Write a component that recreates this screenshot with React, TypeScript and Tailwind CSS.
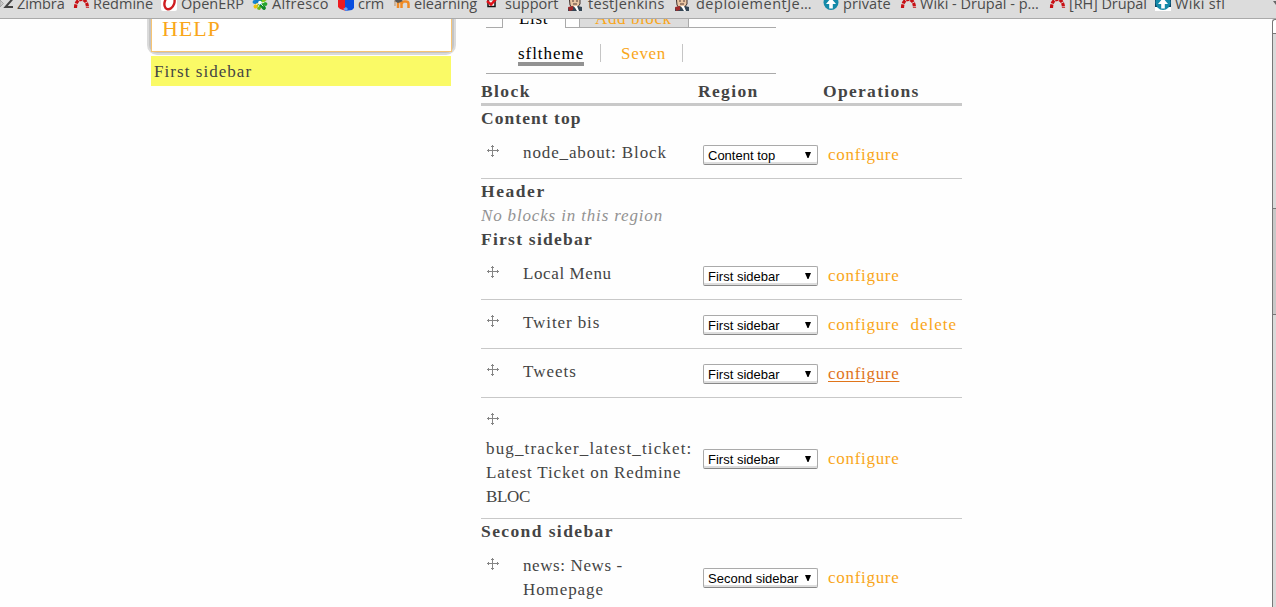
import React from "react";

const serif = "font-['Liberation_Serif',serif] text-[17px] leading-[24px] whitespace-nowrap";

function Redmine() {
  return (
    <svg width="17" height="16" viewBox="0 0 17 16" fill="none">
      <path d="M2.500 13C2.500 7.500 5 4.500 8.500 4.500s6 3 6 8.500" stroke="#c80f14" strokeWidth="3.200" strokeDasharray="3.700 .8" />
    </svg>
  );
}
function Zimbra() {
  return (
    <svg width="16" height="16" viewBox="0 0 16 16">
      <path d="M0 5l3.500 3.500L0 12z" fill="#c8c8c8" stroke="#999" strokeWidth=".8" />
      <path d="M5 4h7.500L5.500 12H13" stroke="#444" strokeWidth="2" fill="none" />
    </svg>
  );
}
function Opera() {
  return (
    <svg width="16" height="16" viewBox="0 0 16 16">
      <rect width="16" height="16" rx="2" fill="#fff" />
      <ellipse cx="8.500" cy="7.500" rx="4.800" ry="7" transform="rotate(20 8.500 7.500)" fill="none" stroke="#cf1c20" strokeWidth="2.400" />
    </svg>
  );
}
function Alfresco() {
  return (
    <svg width="16" height="16" viewBox="0 0 16 16" fill="none" strokeWidth="3.800" strokeLinecap="round">
      <path d="M8 8L2.500 7" stroke="#1684d0" /><path d="M8 8L3.500 11.500" stroke="#f0c30a" />
      <path d="M8 8L7 13" stroke="#71b816" /><path d="M8 8l4 5" stroke="#108a28" />
      <path d="M8 8l5.500 1" stroke="#25a52e" /><path d="M8 8l5-4" stroke="#86c81c" />
      <path d="M8 8V2" stroke="#18a648" /><path d="M8 8L3 3" stroke="#147bc6" />
      <path d="M8 8l-4 1.500M8 8l-2 4M8 8l3 3M8 8l4-.5" stroke="#fff" strokeWidth=".8" />
      <circle cx="8" cy="7.500" r="1.800" fill="#fff" />
    </svg>
  );
}
function Crm() {
  return (
    <svg width="16" height="16" viewBox="0 0 16 16">
      <path d="M0 3l8-3v16l-6-2-2-2z" fill="#ee1a20" /><path d="M7 0l9 1v12l-2 2-7 1z" fill="#0a4fe0" />
      <path d="M5 14l3-2 2 2-2 2z" fill="#6ba2ee" />
    </svg>
  );
}
function Moodle() {
  return (
    <svg width="16" height="16" viewBox="0 0 16 16" fill="none">
      <path d="M4 13V8q2-2.500 3.500 0v5M8 9q0-3 3-2.500 3.500-.5 3.500 2.500v4" stroke="#f08a24" strokeWidth="2.500" />
      <path d="M0 6l5-3 4 3-5 2z" fill="#555" /><path d="M1 6v5" stroke="#b98d62" />
    </svg>
  );
}
function Support() {
  return (
    <svg width="16" height="16" viewBox="0 0 16 16">
      <rect x="4" y="4.500" width="7" height="7" fill="#fff" stroke="#111" strokeWidth="1.500" />
      <path d="M3 6l4 3.500L13 3" fill="none" stroke="#e0121a" strokeWidth="2.500" />
    </svg>
  );
}
function Jenkins() {
  return (
    <svg width="16" height="16" viewBox="0 0 16 16">
      <path d="M2 0h11v9l-3 4H5L3 10z" fill="#e8c4a2" stroke="#40302c" />
      <path d="M1 16v-3l5-2 2 2 3-2 4 1v4z" fill="#334554" />
      <path d="M1 12l5-1v4l-4 1z" fill="#a22a2a" /><path d="M7 11l3 5h2l-2-5z" fill="#fff" />
      <path d="M5 6h2M9 6h2M6 9h4" stroke="#503a36" />
    </svg>
  );
}
function Arrow({ boxed = false }: { boxed?: boolean }) {
  return (
    <svg width="16" height="16" viewBox="0 0 16 16">
      {boxed && <><rect width="16" height="12" fill="#0b4264" /><rect y="12" width="16" height="4" fill="#fff" /></>}
      <circle cx="8" cy="7.500" r="7.500" fill="#148aa9" />
      <path d="M8 3l5 6h-3.200v4.500H6.200V9H3z" fill="#fff" />
    </svg>
  );
}

const bookmarks = [
  { w: "w-[73px]", icon: <Zimbra />, label: "Zimbra", t: "tracking-[-0.1px]" },
  { w: "w-[88px]", icon: <Redmine />, label: "Redmine", t: "ml-[3px]" },
  { w: "w-[91px]", icon: <Opera />, label: "OpenERP", t: "ml-[3px]" },
  { w: "w-[86px]", icon: <Alfresco />, label: "Alfresco", t: "ml-[3px] tracking-[0.3px]" },
  { w: "w-[56px]", icon: <Crm />, label: "crm", t: "ml-[3px]" },
  { w: "w-[90px]", icon: <Moodle />, label: "elearning", t: "ml-[3px]" },
  { w: "w-[83px]", icon: <Support />, label: "support", t: "ml-[4px]" },
  { w: "w-[107px]", icon: <Jenkins />, label: "testJenkins", t: "ml-[4px] tracking-[0.3px]" },
  { w: "w-[149px]", icon: <Jenkins />, label: "deploiementJe…", t: "ml-[5px] tracking-[0.5px]" },
  { w: "w-[77px]", icon: <Arrow />, label: "private", t: "ml-[3px] tracking-[0.1px]" },
  { w: "w-[149px]", icon: <Redmine />, label: "Wiki - Drupal - p…", t: "ml-[3px]" },
  { w: "w-[106px]", icon: <Redmine />, label: "[RH] Drupal", t: "ml-[3px] tracking-[-0.1px]" },
  { w: "w-[100px]", icon: <Arrow boxed />, label: "Wiki sfl", t: "ml-[3px] tracking-[0.35px]" },
];

function Move() {
  return (
    <svg className="ml-[5px] mt-px shrink-0" width="13" height="12" viewBox="0 0 13 12" fill="none" stroke="#858585" shapeRendering="crispEdges">
      <path d="M6.500 0v12M1 5.500h12M5 1.500h3M5 10.500h3M2.500 4v3M11.500 4v3" />
    </svg>
  );
}

function Select({ value }: { value: string }) {
  return (
    <div className="flex h-5 w-[115px] items-center justify-between rounded-[2px] border border-[#aaa] border-b-[#888] bg-white pl-1 pr-[6px] font-['Liberation_Sans',sans-serif] text-[13px] leading-[18px] text-black shadow-[inset_0_-2px_0_#ddd]">
      <span className="whitespace-nowrap pt-px">{value}</span>
      <svg className="-mt-px" width="6" height="6" viewBox="0 0 6 6"><path d="M0 0h6L3.500 6h-1z" /></svg>
    </div>
  );
}

type RowProps = { h: string; selTop: string; value: string; children: React.ReactNode; wrap?: boolean; hover?: boolean; del?: boolean };
function Row({ h, selTop, value, children, wrap, hover, del }: RowProps) {
  return (
    <div className={`mb-px flex w-[481px] shrink-0 border-b border-[#c8c8c8] ${h}`}>
      <div className={`flex w-[222px] pt-[13px] ${wrap ? "flex-col" : ""}`}>
        <Move />
        <div className={wrap ? "ml-[5px] mt-[12px]" : "-mt-[3px] ml-[24px]"}>{children}</div>
      </div>
      <div className={`flex items-start ${selTop}`}>
        <Select value={value} />
        <span className={`-mt-[2px] ml-[10px] tracking-[0.7px] ${hover ? "text-[#e0741a] underline underline-offset-2" : "text-[#f9a61a]"}`}>configure</span>
        {del && <span className="-mt-[2px] ml-[11px] tracking-[1px] text-[#f9a61a]">delete</span>}
      </div>
    </div>
  );
}

function Title({ children, className }: { children: React.ReactNode; className: string }) {
  return <div className={`h-6 shrink-0 text-[17.5px] font-bold leading-[22px] ${className}`}>{children}</div>;
}

export default function App() {
  return (
    <div className="flex h-[607px] w-[1276px] flex-col overflow-hidden bg-[#fefefe]">
      <div className="flex h-[19px] shrink-0 overflow-hidden border-b border-[#aaa] bg-[#dcdcdc]">
        {bookmarks.map((b) => (
          <div key={b.label} className={`flex h-5 shrink-0 ${b.w}`}>
            <span className="-mt-[5px] w-[17px] shrink-0">{b.icon}</span>
            <span className={`-mt-[6px] whitespace-nowrap font-['Open_Sans',sans-serif] text-[14.5px] leading-[20px] text-[#4b4b4b] ${b.t}`}>{b.label}</span>
          </div>
        ))}
        <svg className="mt-px ml-auto shrink-0" width="3" height="5"><path d="M0 0h3v4z" fill="#666" /></svg>
      </div>
      <div className={`flex min-h-0 flex-1 text-[#444] ${serif}`}>
        <aside className="w-[481px] shrink-0 pl-[147px]">
          <div className="h-[36px] w-[309px] rounded-b-[10px] bg-[#dadada] px-[2px] pb-[2px]">
            <div className="h-[34px] rounded-b-[8px] bg-[#c4c4c4] px-[2px]">
              <div className="h-[33px] w-[301px] border border-t-0 border-[#f7c473] bg-white pl-[10px] text-[22px] leading-[20px] tracking-[0.9px] text-[#f9a61a]">HELP</div>
            </div>
          </div>
          <div className="ml-[4px] mt-px h-[30px] w-[300px] bg-[#fafa66] pl-[3px] pt-[4px] tracking-[1.05px]">First sidebar</div>
        </aside>
        <main className="flex w-[481px] shrink-0 flex-col overflow-hidden">
          <div className="ml-[5px] flex h-[9px] w-[290px] shrink-0">
            <div className="w-[17px] border-b border-r border-[#aaa]" />
            <div className="h-[9px] w-[62px] overflow-hidden pl-[16px] text-black"><div className="-mt-[12px] tracking-[0.7px]">List</div></div>
            <div className="w-[14px] border-b border-l border-[#aaa]" />
            <div className="h-[9px] w-[110px] overflow-hidden border-b border-l border-r border-[#aaa] bg-[#dcdcdc] pl-[15px] text-[#f9a61a]"><div className="-mt-[12px] tracking-[0.6px]">Add block</div></div>
            <div className="flex-1 border-b border-[#aaa]" />
          </div>
          <div className="ml-[5px] flex h-[46px] w-[290px] shrink-0 border-b border-[#aaa]">
            <div className="ml-[32px] mt-[14px] h-[24px] w-[66px] border-b-4 border-[#929292] tracking-[0.95px] text-black">sfltheme</div>
            <div className="ml-[16px] mt-[16px] h-[18px] w-px bg-[#c5c5c5]" />
            <div className="ml-[20px] mt-[14px] w-[61px] tracking-[0.7px] text-[#f9a61a]">Seven</div>
            <div className="mt-[16px] h-[18px] w-px bg-[#c5c5c5]" />
          </div>
          <div className="flex h-[32px] shrink-0 border-b-[3px] border-[#c9c9c9] pt-[6px] text-[17.5px] font-bold leading-[22px]">
            <div className="w-[217px] tracking-[1.4px]">Block</div>
            <div className="w-[125px] tracking-[1.35px]">Region</div>
            <div className="tracking-[1.3px]">Operations</div>
          </div>
          <div className="mt-px flex flex-col">
            <Title className="tracking-[1.05px]">Content top</Title>
            <Row h="h-[48px]" selTop="pt-[14px]" value="Content top"><span className="tracking-[0.88px]">node_about: Block</span></Row>
            <Title className="tracking-[1.55px]">Header</Title>
            <div className="h-6 italic tracking-[0.84px] text-[#929292]">No blocks in this region</div>
            <Title className="tracking-[1.25px]">First sidebar</Title>
            <Row h="h-[48px]" selTop="pt-[14px]" value="First sidebar"><span className="tracking-[0.6px]">Local Menu</span></Row>
            <Row h="h-[48px]" selTop="pt-[14px]" value="First sidebar" del><span className="tracking-[0.9px]">Twiter bis</span></Row>
            <Row h="h-[48px]" selTop="pt-[14px]" value="First sidebar" hover><span className="tracking-[1px]">Tweets</span></Row>
            <Row h="h-[120px]" selTop="pt-[50px]" value="First sidebar" wrap>
              <div className="tracking-[1.15px]">bug_tracker_latest_ticket:</div>
              <div className="tracking-[0.84px]">Latest Ticket on Redmine</div>
              <div className="tracking-[-0.3px]">BLOC</div>
            </Row>
            <Title className="tracking-[1.4px]">Second sidebar</Title>
            <Row h="h-[73px]" selTop="pt-[24px]" value="Second sidebar">
              <div className="tracking-[0.6px]">news: News -</div>
              <div className="tracking-[0.9px]">Homepage</div>
            </Row>
          </div>
        </main>
        <div className="ml-auto flex w-[4px] flex-col rounded-tl-[3px] border-l border-t border-[#777] bg-[#dadada]">
          <div className="h-[14px] rounded-tl-[3px] border-b border-[#777] bg-white" />
          <div className="h-[174px]" />
          <div className="h-[107px] border-y border-[#777] bg-[#c8c8c8]" />
        </div>
      </div>
    </div>
  );
}
